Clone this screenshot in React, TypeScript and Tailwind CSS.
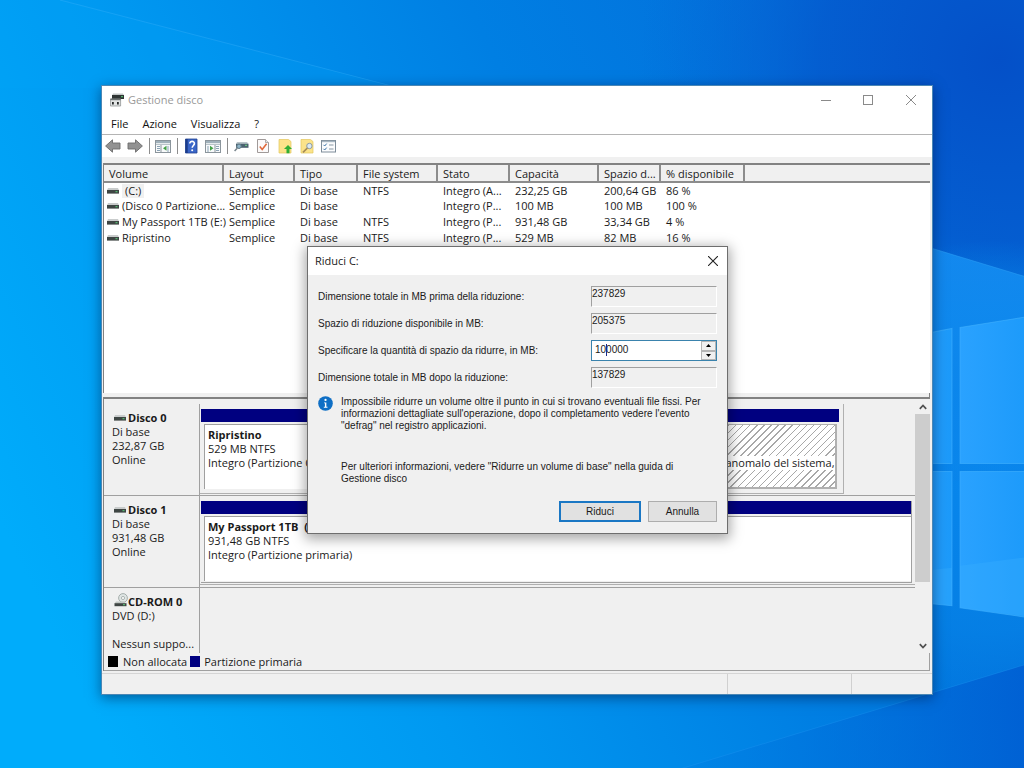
import type { ReactNode } from "react";
import clsx from "clsx";

const COLUMNS = [
  { label: "Volume", width: "w-[119px]" },
  { label: "Layout", width: "w-[71px]" },
  { label: "Tipo", width: "w-[63px]" },
  { label: "File system", width: "w-[80px]" },
  { label: "Stato", width: "w-[72px]" },
  { label: "Capacità", width: "w-[89px]" },
  { label: "Spazio d...", width: "w-[62px]" },
  { label: "% disponibile", width: "w-[84px]" },
];

const VOLUMES = [
  ["(C:)", "Semplice", "Di base", "NTFS", "Integro (A...", "232,25 GB", "200,64 GB", "86 %"],
  ["(Disco 0 Partizione...", "Semplice", "Di base", "", "Integro (P...", "100 MB", "100 MB", "100 %"],
  ["My Passport 1TB (E:)", "Semplice", "Di base", "NTFS", "Integro (P...", "931,48 GB", "33,34 GB", "4 %"],
  ["Ripristino", "Semplice", "Di base", "NTFS", "Integro (P...", "529 MB", "82 MB", "16 %"],
];

const Wallpaper = () => (
  <svg className="absolute inset-0 h-full w-full" viewBox="0 0 1024 768" preserveAspectRatio="none" aria-hidden="true">
    <defs>
      <linearGradient id="sky" x1="0" y1="0.68" x2="1" y2="0.32">
        <stop offset="0" stopColor="#00acfb" />
        <stop offset="0.3" stopColor="#0099f1" />
        <stop offset="0.62" stopColor="#007fe3" />
        <stop offset="1" stopColor="#046ad8" />
      </linearGradient>
      <radialGradient id="dusk" gradientUnits="userSpaceOnUse" cx="1000" cy="60" r="360">
        <stop offset="0" stopColor="#0450c8" />
        <stop offset="0.5" stopColor="#0458cd" stopOpacity="0.75" />
        <stop offset="1" stopColor="#0468d6" stopOpacity="0" />
      </radialGradient>
      <radialGradient id="glow" gradientUnits="userSpaceOnUse" cx="990" cy="470" r="230">
        <stop offset="0" stopColor="#0888ee" />
        <stop offset="0.7" stopColor="#0681e6" stopOpacity="0.8" />
        <stop offset="1" stopColor="#0681e6" stopOpacity="0" />
      </radialGradient>
      <linearGradient id="beam" x1="0" y1="0" x2="0" y2="1">
        <stop offset="0" stopColor="#1690f4" stopOpacity="0.85" />
        <stop offset="1" stopColor="#0a84ea" stopOpacity="0.5" />
      </linearGradient>
      <linearGradient id="floor" x1="0" y1="0" x2="1" y2="0">
        <stop offset="0" stopColor="#0077df" stopOpacity="0.2" />
        <stop offset="1" stopColor="#005fd3" stopOpacity="0.9" />
      </linearGradient>
      <linearGradient id="pane" x1="0" y1="0" x2="1" y2="0">
        <stop offset="0" stopColor="#2aa2ff" />
        <stop offset="1" stopColor="#1c9afa" />
      </linearGradient>
    </defs>
    <rect width="1024" height="768" fill="url(#sky)" />
    <rect width="1024" height="768" fill="url(#dusk)" />
    <rect width="1024" height="768" fill="url(#glow)" />
    <path d="M60 0 400 88H0V0Z" fill="#00a8fb" opacity="0.18" />
    <path d="M60 0 400 88" stroke="#3bb4fb" strokeOpacity="0.35" />
    <path d="M925 246 1024 276V480H925Z" fill="url(#beam)" />
    <path d="M925 246 1024 276" stroke="#2a9df5" strokeOpacity="0.6" />
    <path d="M680 768 1024 664V768Z" fill="url(#floor)" />
    <path d="M680 768 1024 664" fill="none" stroke="#1b94f0" strokeOpacity="0.4" />
    <g fill="url(#pane)" stroke="#45b4ff" strokeOpacity="0.55">
      <path d="M900 338 952 328V463H900Z" />
      <path d="M960 327 1030 316V463H960Z" />
      <path d="M900 471H952V605L900 600Z" />
      <path d="M960 471H1030V617L960 607Z" />
    </g>
    <path d="M933 569 952 567V605L933 603ZM960 565 1030 556V616L960 607Z" fill="#38aeff" opacity="0.35" />
  </svg>
);

const DriveIcon = ({ className }: { className?: string }) => (
  <svg viewBox="0 0 12 6" className={clsx("h-[6px] w-[12px] shrink-0", className)} aria-hidden="true">
    <path d="M1 0h10L12 2.2H0Z" fill="#c9cccc" />
    <rect y="2" width="12" height="3.6" fill="#3f4644" />
    <rect x="8.5" y="3.2" width="2" height="1" fill="#5bd07b" />
  </svg>
);

const DiscDriveIcon = () => (
  <svg viewBox="0 0 14 14" className="mb-[5px] h-[14px] w-[14px] shrink-0" aria-hidden="true">
    <circle cx="9" cy="5" r="4.4" fill="#dfe5e4" stroke="#96a09d" strokeWidth="0.8" />
    <circle cx="9" cy="5" r="1.6" fill="#f6f6f6" stroke="#96a09d" strokeWidth="0.7" />
    <path d="M2 8.6h8L12 10.4H0.5Z" fill="#c1c8c5" />
    <rect x="0.5" y="10.2" width="12" height="3" fill="#3f4644" />
    <rect x="9" y="11.2" width="2" height="1" fill="#5bd07b" />
  </svg>
);

const AppIcon = () => (
  <svg viewBox="0 0 14 14" className="h-[14px] w-[14px]" aria-hidden="true">
    <path d="M3 0.4h10l1 2H2Z" fill="#c3c7c7" />
    <rect x="2" y="2" width="12" height="4" fill="#2f3534" />
    <rect x="11" y="3.2" width="2" height="1" fill="#5bd07b" />
    <path d="M0.4 6H10.6V13H0.4Z" fill="#e2e4e4" stroke="#85898a" strokeWidth="0.7" />
    <path d="M0.4 5.6h10.2v1.6H0.4Z" fill="#6b7170" />
    <path d="M2 9h1.8v2.6H2ZM7 9h1.8v2.6H7Z" fill="#26292a" />
  </svg>
);

const ToolIcon = ({ children }: { children: ReactNode }) => (
  <svg viewBox="0 0 16 16" className="h-4 w-4" aria-hidden="true">
    {children}
  </svg>
);

const arrowPath = "M0.6 8 7.5 1.8V5H15v6H7.5v3.2Z";

const PanelShape = () => (
  <>
    <rect x="0.5" y="2.5" width="15" height="12" fill="#f8fafb" stroke="#8b959c" />
    <rect x="1" y="3" width="14" height="2.2" fill="#9fb0ba" />
    <path d="M1 6.5h14" stroke="#b9c3c9" />
  </>
);

const YellowSheet = () => <path d="M2 1.5h9.5l2.5 2V15H2Z" fill="#fbe38a" stroke="#e3c65d" strokeWidth="0.7" />;

const TOOLS: { label: string; icon: ReactNode; divided?: boolean }[] = [
  { label: "Indietro", icon: <path d={arrowPath} fill="#929292" stroke="#6c6c6c" strokeWidth="0.9" /> },
  {
    label: "Avanti",
    divided: true,
    icon: <path d={arrowPath} transform="rotate(180 8 8)" fill="#929292" stroke="#6c6c6c" strokeWidth="0.9" />,
  },
  {
    label: "Mostra albero console",
    divided: true,
    icon: (
      <>
        <PanelShape />
        <path d="M6 7v7.5" stroke="#8b959c" />
        <path d="M2 8.5h3M2 10.5h3M2 12.5h3M13 8v6" stroke="#8ba3b5" />
        <path d="M11.5 7.8v5L8 10.3Z" fill="#43a047" />
      </>
    ),
  },
  {
    label: "Guida",
    icon: (
      <>
        <path d="M2.5 1h11.5v14H2.5Z" fill="#3a66c8" stroke="#21438f" strokeWidth="0.8" />
        <path d="M2.5 1h2.2v14H2.5Z" fill="#1c3c8a" />
        <path d="M6.8 5.6C6.8 2.5 11.6 2.8 11.4 5.6 11.3 7.4 9.2 7.6 9.2 9.8" fill="none" stroke="#fff" strokeWidth="1.6" />
        <circle cx="9.2" cy="12.2" r="1" fill="#fff" />
      </>
    ),
  },
  {
    label: "Mostra riquadro azioni",
    divided: true,
    icon: (
      <>
        <PanelShape />
        <path d="M10 7v7.5" stroke="#8b959c" />
        <path d="M11 8.5h3M11 10.5h3M11 12.5h3M3 8v6" stroke="#8ba3b5" />
        <path d="M5 7.8v5l3.5-2.5Z" fill="#43a047" />
      </>
    ),
  },
  {
    label: "Connetti",
    icon: (
      <>
        <path d="M4 4h10l1.5 2H3Z" fill="#b8c4c9" />
        <rect x="3" y="5.8" width="12.5" height="4" fill="#4b6270" />
        <path d="M12 7.3h2" stroke="#71dd83" />
        <circle cx="6" cy="8.3" r="2.2" fill="#8fb4c8" stroke="#5e7986" />
        <path d="M4.4 10 1.6 13" stroke="#78858c" strokeWidth="1.5" />
      </>
    ),
  },
  {
    label: "Proprietà",
    icon: (
      <>
        <path d="M2.5 1.5h8l3 3v10h-11Z" fill="#fcfafa" stroke="#a09a99" />
        <path d="M10.5 1.5v3h3" fill="#e5e5e5" stroke="#a09a99" strokeWidth="0.8" />
        <path d="M4.8 8.6 7.2 11.4 11.6 5.8" fill="none" stroke="#e0693b" strokeWidth="1.6" />
      </>
    ),
  },
  {
    label: "Esporta",
    icon: (
      <>
        <YellowSheet />
        <path d="M11 7 15 11H12.5v4.2h-3V11H7Z" fill="#2fae35" />
      </>
    ),
  },
  {
    label: "Cerca",
    icon: (
      <>
        <YellowSheet />
        <circle cx="10.4" cy="8" r="2.7" fill="#dceaf2" stroke="#8c9ba3" />
        <path d="M8.4 10 4 14.4" stroke="#a58b55" strokeWidth="1.7" />
      </>
    ),
  },
  {
    label: "Elenco attività",
    icon: (
      <>
        <rect x="0.5" y="2.5" width="14" height="11.5" fill="#fbfcfd" stroke="#7e8d9a" />
        <path d="M1 3.5h13" stroke="#a7b6c2" strokeWidth="1.4" />
        <path d="m2.5 6.8 1.2 1.2 2-2.4M2.5 10.8 3.7 12l2-2.4" fill="none" stroke="#3e75a8" />
        <path d="M8 7h4.5M8 11h4.5" stroke="#8897a3" />
      </>
    ),
  },
];

const TitleBar = () => (
  <header className="flex h-[27px] items-center bg-white pl-2">
    <AppIcon />
    <h1 className="ml-1 flex-1 text-[11px] text-[#999]">Gestione disco</h1>
    <div className="flex text-[#8a8a8a]">
      <button type="button" aria-label="Riduci a icona" className="flex h-[27px] w-[42px] items-center justify-center">
        <svg viewBox="0 0 10 10" className="h-[10px] w-[10px]"><path d="M0 5.5h10" stroke="currentColor" /></svg>
      </button>
      <button type="button" aria-label="Ingrandisci" className="flex h-[27px] w-[42px] items-center justify-center">
        <svg viewBox="0 0 10 10" className="h-[10px] w-[10px]"><rect x="0.5" y="0.5" width="9" height="9" fill="none" stroke="currentColor" /></svg>
      </button>
      <button type="button" aria-label="Chiudi" className="flex h-[27px] w-[43px] items-center justify-center">
        <svg viewBox="0 0 10 10" className="h-[10px] w-[10px]"><path d="m0 0 10 10M10 0 0 10" stroke="currentColor" /></svg>
      </button>
    </div>
  </header>
);

const MenuBar = () => (
  <nav className="flex h-[22px] items-center gap-[14px] border-b border-[#b4b4b4] bg-white pl-[9px] text-[11px] text-[#111]">
    {["File", "Azione", "Visualizza", "?"].map((item) => (
      <button key={item} type="button">{item}</button>
    ))}
  </nav>
);

const Toolbar = () => (
  <div role="toolbar" className="flex h-[22px] items-center bg-white">
    {TOOLS.map((tool) => (
      <div key={tool.label} className="flex items-center">
        <button type="button" aria-label={tool.label} className="flex w-[22px] justify-center">
          <ToolIcon>{tool.icon}</ToolIcon>
        </button>
        {tool.divided && (
          <span className="flex w-[6px] justify-center"><span className="h-4 w-px bg-[#8d8d8d]" /></span>
        )}
      </div>
    ))}
  </div>
);

const VolumeList = () => (
  <section className="min-h-[230px] border-t-2 border-l border-[#828282] bg-white">
    <table className="w-full table-fixed border-collapse text-left">
      <thead>
        <tr className="h-[17px] border-b-2 border-[#8c8c8c] bg-[#f0f0f0] leading-[13px]">
          {COLUMNS.map((column) => (
            <th key={column.label} className={clsx("border-r-2 border-[#8c8c8c] p-0 pl-[5px] font-normal whitespace-nowrap", column.width)}>
              {column.label}
            </th>
          ))}
          <th className="p-0" aria-label="Altro" />
        </tr>
      </thead>
      <tbody>
        {VOLUMES.map((row, i) => (
          <tr key={row[0]} className="h-[16px]">
            {row.map((cell, j) => (
              <td key={j} className={clsx("p-0 whitespace-nowrap", j === 0 ? "pl-[3px]" : "pl-[6px]")}>
                {j === 0 ? (
                  <span className="flex items-center gap-[3px]">
                    <DriveIcon />
                    <span className={clsx(i === 0 && "bg-[#f0f0f0] px-[3px]")}>{cell}</span>
                  </span>
                ) : (
                  cell
                )}
              </td>
            ))}
            <td />
          </tr>
        ))}
      </tbody>
    </table>
  </section>
);

type DiskProps = { icon: ReactNode; name: string; lines: string[]; children?: ReactNode; className: string };

const DiskRow = ({ icon, name, lines, children, className }: DiskProps) => (
  <div className={clsx("flex", className)}>
    <div className="w-[96px] shrink-0 border-r border-b border-[#a0a0a0] pt-[7px] pl-2 leading-[14px]">
      <h2 className="flex h-[14px] items-center gap-px pl-[2px] font-bold">
        {icon}
        {name}
      </h2>
      {lines.map((line, i) => (
        <p key={i} className="h-[14px] whitespace-pre">{line}</p>
      ))}
    </div>
    <div className="min-w-0 flex-1 border-b border-[#a0a0a0]">{children}</div>
  </div>
);

type PartitionProps = { title: string; lines: string[]; className?: string; hatched?: boolean };

const Partition = ({ title, lines, className, hatched }: PartitionProps) => (
  <div className={clsx("min-w-0", className)}>
    <div className="h-[13px] bg-[#000080]" />
    <div
      className={clsx(
        "mt-[2px] ml-[3px] h-[65px] overflow-hidden border-t border-l border-[#a0a0a0] pt-[3px] leading-[14px] whitespace-nowrap",
        hatched
          ? "mr-[2px] flex flex-col items-end border-r-2 border-b-2 border-[#b0b0b0] bg-[repeating-linear-gradient(135deg,#fff_0px,#fff_4px,#a8a8a8_4px,#a8a8a8_5px)]"
          : "bg-white pl-[3px]",
      )}
    >
      <h3 className="h-[14px] font-bold whitespace-pre">{title}</h3>
      {lines.map((line, i) => (
        <p key={i} className={clsx("h-[14px]", hatched && line && "bg-white")}>{line}</p>
      ))}
    </div>
  </div>
);

const Chevron = ({ d }: { d: string }) => (
  <svg viewBox="0 0 8 8" className="h-2 w-2" aria-hidden="true">
    <path d={d} fill="none" stroke="#505050" strokeWidth="1.7" />
  </svg>
);

const DiskMap = () => (
  <section className="border-l border-[#828282] bg-[#f0f0f0]">
    <div className="flex">
      <div className="min-w-0 flex-1 pt-[5px]">
        <DiskRow
          icon={<DriveIcon className="mr-px" />}
          name="Disco 0"
          lines={["Di base", "232,87 GB", "Online"]}
          className="h-[92px]"
        >
          <div className="flex h-[90px] w-[90%] border-r border-b border-[#b0b0b0] pt-[5px] pr-1 pl-px">
            <Partition title="Ripristino" lines={["529 MB NTFS", "Integro (Partizione OEM)"]} className="w-[150px]" />
            <Partition title="" lines={["", "arresto anomalo del sistema,"]} className="flex-1" hatched />
          </div>
        </DiskRow>
        <DiskRow
          icon={<DriveIcon className="mr-px" />}
          name="Disco 1"
          lines={["Di base", "931,48 GB", "Online"]}
          className="h-[92px]"
        >
          <div className="h-[89px] border-b border-[#b0b0b0] pt-[5px] pr-[3px] pl-px">
            <Partition
              title="My Passport 1TB  (E:)"
              lines={["931,48 GB NTFS", "Integro (Partizione primaria)"]}
              className="border-r border-b border-[#a0a0a0] pb-px"
            />
          </div>
        </DiskRow>
        <div className="flex h-[65px]">
          <div className="w-[96px] shrink-0 border-r border-[#a0a0a0] pt-[7px] pl-2 leading-[14px]">
            <h2 className="flex h-[14px] items-center pl-[2px] font-bold whitespace-nowrap">
              <DiscDriveIcon />
              CD-ROM 0
            </h2>
            <p>DVD (D:)</p>
            <p className="mt-[14px]">Nessun suppo...</p>
          </div>
        </div>
      </div>
      <div className="flex w-[15px] flex-col">
        <button type="button" aria-label="Scorri su" className="flex h-[15px] items-center justify-center"><Chevron d="M0.8 5.8 4 2.4 7.2 5.8" /></button>
        <div className="flex-1"><div className="h-[75%] bg-[#cdcdcd]" /></div>
        <button type="button" aria-label="Scorri giù" className="flex h-[15px] items-center justify-center"><Chevron d="M0.8 2.2 4 5.6 7.2 2.2" /></button>
      </div>
    </div>
    <div className="flex h-[18px] items-center border-r border-b border-[#a0a0a0] pl-[4px]">
      <span className="h-[11px] w-[10px] bg-black" />
      <span className="ml-[5px]">Non allocata</span>
      <span className="ml-[3px] h-[11px] w-[10px] bg-[#000080]" />
      <span className="ml-1">Partizione primaria</span>
    </div>
  </section>
);

const ReadOnlyField = ({ id, value }: { id: string; value: string }) => (
  <input
    id={id}
    readOnly
    value={value}
    className="h-[21px] w-full border border-t-[#a0a0a0] border-r-white border-b-white border-l-[#a0a0a0] bg-[#f0f0f0] pb-[6px] outline-none"
  />
);

const ShrinkDialog = () => (
  <div
    role="dialog"
    aria-label="Riduci C:"
    className="absolute top-[160px] left-[205px] w-[421px] border border-[#6e6e6e] bg-[#f0f0f0] font-['Liberation_Sans',Arial,sans-serif] text-[10px] text-[#1a1a1a] shadow-[0_3px_12px_2px_rgba(0,0,0,0.35)]"
  >
    <div className="flex h-[28px] items-center justify-between bg-white pr-[9px] pl-[7px]">
      <h2 className="font-['Open_Sans','Noto_Sans',sans-serif] text-[11px]">Riduci C:</h2>
      <button type="button" aria-label="Chiudi finestra" className="flex">
        <svg viewBox="0 0 10 10" className="h-[10px] w-[10px]"><path d="m0 0 10 10M10 0 0 10" stroke="#222" strokeWidth="1.1" /></svg>
      </button>
    </div>
    <form className="px-[10px] pt-[11px] pb-[11px]">
      <div className="grid grid-cols-[1fr_126px] items-center gap-y-[6px]">
        <label htmlFor="total-before">Dimensione totale in MB prima della riduzione:</label>
        <ReadOnlyField id="total-before" value="237829" />
        <label htmlFor="available">Spazio di riduzione disponibile in MB:</label>
        <ReadOnlyField id="available" value="205375" />
        <label htmlFor="amount">Specificare la quantità di spazio da ridurre, in MB:</label>
        <div className="relative flex h-[21px] border border-[#3a83ad] bg-white">
          <input id="amount" defaultValue="100000" className="min-w-0 flex-1 pb-[2px] pl-[3px] outline-none" />
          <span className="absolute top-[3px] left-[14px] h-[12px] w-px bg-[#1a2a8a]" />
          <div className="flex w-[15px] flex-col bg-[#f0f0f0]">
            <button type="button" aria-label="Aumenta" className="flex flex-1 items-center justify-center border border-[#b5b5b5]">
              <svg viewBox="0 0 5 3" className="h-[3px] w-[5px]"><path d="M0 3 2.5 0 5 3Z" /></svg>
            </button>
            <button type="button" aria-label="Diminuisci" className="flex flex-1 items-center justify-center border border-[#b5b5b5]">
              <svg viewBox="0 0 5 3" className="h-[3px] w-[5px]"><path d="M0 0 2.5 3 5 0Z" /></svg>
            </button>
          </div>
        </div>
        <label htmlFor="total-after">Dimensione totale in MB dopo la riduzione:</label>
        <ReadOnlyField id="total-after" value="137829" />
      </div>
      <div className="mt-[8px] flex gap-2 leading-[12px]">
        <svg viewBox="0 0 16 16" className="h-[15px] w-[15px] shrink-0" aria-hidden="true">
          <circle cx="8" cy="8" r="7.8" fill="#0f6fc5" />
          <circle cx="8" cy="4.2" r="1.2" fill="#fff" />
          <path d="M6.4 6.8h2.5v4.6h1.2v1H6.2v-1h1.2V7.8h-1Z" fill="#fff" />
        </svg>
        <div className="whitespace-nowrap">
          <p>
            Impossibile ridurre un volume oltre il punto in cui si trovano eventuali file fissi. Per
            <br />
            informazioni dettagliate sull'operazione, dopo il completamento vedere l'evento
            <br />
            "defrag" nel registro applicazioni.
          </p>
          <p className="mt-[29px]">
            Per ulteriori informazioni, vedere "Ridurre un volume di base" nella guida di
            <br />
            Gestione disco
          </p>
        </div>
      </div>
      <div className="mt-[16px] flex justify-end gap-[7px]">
        <button type="button" className="h-[21px] w-[82px] border-2 border-[#1a77c4] bg-[#e1e1e1]">Riduci</button>
        <button type="button" className="h-[21px] w-[69px] border border-[#adadad] bg-[#e1e1e1]">Annulla</button>
      </div>
    </form>
  </div>
);

const StatusBar = () => (
  <footer className="mt-[2px] flex h-[21px] border-t border-[#d5d5d5]">
    <div className="flex-1 border-r border-[#d0d0d0]" />
    <div className="w-[124px] border-r border-[#d0d0d0]" />
    <div className="w-[80px]" />
  </footer>
);

const App = () => (
  <main className="relative min-h-screen overflow-hidden bg-[#0088e6] pt-[85px] pr-[91px] pb-[74px] pl-[101px] font-['Open_Sans','Noto_Sans',sans-serif] text-[11px] leading-[14px] text-[#1a1a1a]">
    <Wallpaper />
    <div className="relative border border-[#4b87b5] bg-[#f0f0f0] shadow-[0_3px_12px_rgba(0,20,60,0.5)]">
      <TitleBar />
      <MenuBar />
      <Toolbar />
      <div className="mt-[6px] mr-[2px] ml-px">
        <VolumeList />
        <div className="h-[6px] border-r border-b-2 border-[#828282] bg-[#f0f0f0]" />
        <DiskMap />
      </div>
      <StatusBar />
      <ShrinkDialog />
    </div>
  </main>
);

export default App;
